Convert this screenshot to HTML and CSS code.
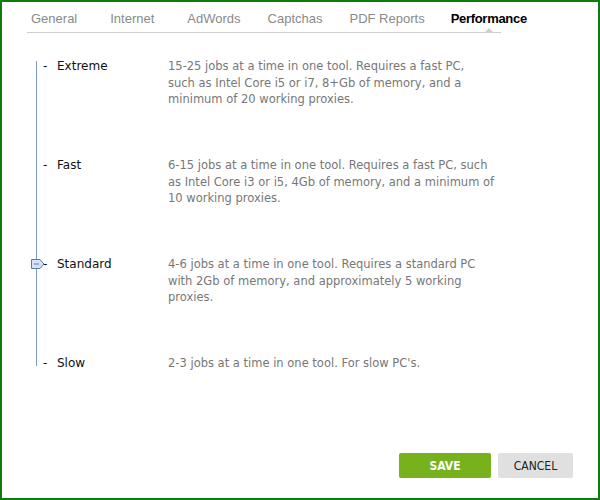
FILE: index.html
```html
<!DOCTYPE html>
<html>
<head>
<meta charset="utf-8">
<link rel="stylesheet" href="styles.css">
</head>
<body>
<div class="frame">
  <div class="tabs">
    <span class="tab">General</span>
    <span class="tab">Internet</span>
    <span class="tab">AdWords</span>
    <span class="tab">Captchas</span>
    <span class="tab">PDF Reports</span>
    <span class="tab active">Performance</span>
  </div>
  <div class="levels">
    <div class="track"></div>
    <div class="level">
      <div class="label"><span class="dash">-</span>Extreme</div>
      <div class="desc">15-25 jobs at a time in one tool. Requires a fast PC,<br>such as Intel Core i5 or i7, 8+Gb of memory, and a<br>minimum of 20 working proxies.</div>
    </div>
    <div class="level">
      <div class="label"><span class="dash">-</span>Fast</div>
      <div class="desc">6-15 jobs at a time in one tool. Requires a fast PC, such<br>as Intel Core i3 or i5, 4Gb of memory, and a minimum of<br>10 working proxies.</div>
    </div>
    <div class="level">
      <div class="label">
        <svg class="handle" width="14" height="10" viewBox="0 0 14 10"><path d="M0.5 0.5 H9 L13 5 L9 9.5 H0.5 Z" fill="#d6e2f2" stroke="#5a78a8"/><path d="M3 5 H8" stroke="#5a78a8" stroke-width="1"/></svg>
        <span class="dash">-</span>Standard</div>
      <div class="desc">4-6 jobs at a time in one tool. Requires a standard PC<br>with 2Gb of memory, and approximately 5 working<br>proxies.</div>
    </div>
    <div class="level">
      <div class="label"><span class="dash">-</span>Slow</div>
      <div class="desc">2-3 jobs at a time in one tool. For slow PC's.</div>
    </div>
  </div>
  <div class="buttons">
    <button class="btn save">SAVE</button>
    <button class="btn cancel">CANCEL</button>
  </div>
</div>
</body>
</html>
```
FILE: styles.css
```css
html, body {
  margin: 0;
  padding: 0;
  background: #fff;
}
.frame {
  box-sizing: border-box;
  width: 600px;
  height: 500px;
  border: 2px solid #0a7d0a;
  display: flex;
  flex-direction: column;
  font-family: "DejaVu Sans", sans-serif;
}
.tabs {
  flex: none;
  margin-left: 25px;
  width: 474px;
  height: 31px;
  border-bottom: 1px solid #cfcfcf;
  display: flex;
  align-items: flex-start;
  gap: 30px;
  padding-left: 4px;
  box-sizing: border-box;
  font-family: "Liberation Sans", Arial, sans-serif;
  font-size: 13px;
  color: #8a8a8a;
}
.tab {
  flex: none;
  white-space: nowrap;
  padding-top: 9px;
  line-height: 16px;
}
.tab:nth-child(2), .tab:nth-child(3) {
  margin-left: 3px;
}
.tab:nth-child(4), .tab:nth-child(5) {
  margin-left: -3px;
}
.tab.active {
  margin-left: -4px;
  color: #000;
  font-weight: bold;
  letter-spacing: -0.3px;
  position: relative;
}
.tab.active::after {
  content: "";
  position: absolute;
  left: 50%;
  margin-left: -4px;
  top: 26px;
  border-left: 4px solid transparent;
  border-right: 4px solid transparent;
  border-bottom: 4px solid #cfcfcf;
  width: 0;
  height: 0;
}
.levels {
  flex: none;
  position: relative;
  margin-top: 25px;
  padding-left: 41px;
}
.track {
  position: absolute;
  left: 34px;
  top: 3px;
  width: 1px;
  height: 305px;
  background: #7c9bd0;
}
.level {
  display: flex;
  height: 99px;
  font-size: 12px;
  line-height: 16.5px;
}
.level:last-child {
  height: auto;
}
.label {
  width: 125px;
  flex: none;
  color: #111;
  position: relative;
}
.dash {
  display: inline-block;
  width: 14px;
}
.handle {
  position: absolute;
  left: -12px;
  top: 3px;
}
.desc {
  white-space: nowrap;
  font-size: 11.5px;
  color: #777;
}
.buttons {
  flex: none;
  margin-top: auto;
  margin-bottom: 20px;
  display: flex;
  justify-content: flex-end;
  gap: 7px;
  padding-right: 25px;
}
.btn {
  border: none;
  border-radius: 2px;
  height: 25px;
  font-family: "DejaVu Sans Condensed", "DejaVu Sans", sans-serif;
  font-size: 12px;
  padding: 0;
}
.save {
  width: 92px;
  background: #77b11c;
  color: #fff;
  font-weight: bold;
}
.cancel {
  width: 75px;
  background: #e0e0e0;
  color: #222;
}
```
